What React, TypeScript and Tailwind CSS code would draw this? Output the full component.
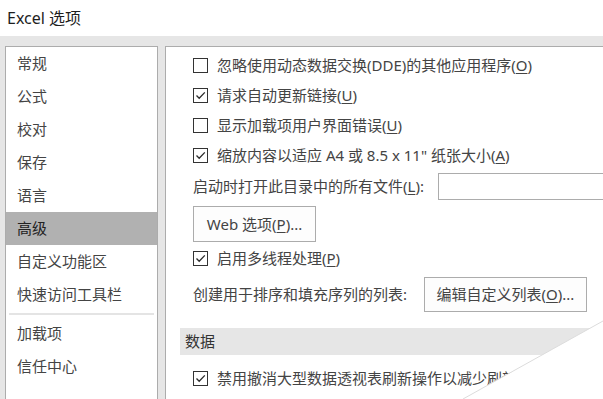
import React from "react"

const menu = ["常规", "公式", "校对", "保存", "语言", "高级", "自定义功能区", "快速访问工具栏"]
const menu2 = ["加载项", "信任中心"]

function Box({ checked }: { checked?: boolean }) {
    return (
        <span className="w-[15px] h-[15px] border border-[#333] bg-white flex items-center justify-center shrink-0">
            {checked && (
                <svg width="13" height="13" viewBox="0 0 13 13">
                    <polyline points="2.5,6.5 5.2,9.3 10.8,3.4" fill="none" stroke="#2b2b2b" strokeWidth="1.3" />
                </svg>
            )}
        </span>
    )
}

function CheckRow({ checked, children, className = "" }: { checked?: boolean; children: React.ReactNode; className?: string }) {
    return (
        <div className={`flex items-center h-[30px] ml-[13px] ${className}`}>
            <Box checked={checked} />
            <span className="ml-[9px] whitespace-nowrap">{children}</span>
        </div>
    )
}

export default function App() {
    return (
        <div
            className="relative w-[603px] h-[399px] overflow-hidden bg-white text-[15px] text-[#444]"
            style={{ fontFamily: '"Noto Sans", "Noto Sans CJK SC", sans-serif' }}
        >
            <div className="h-[36px] flex items-center pl-[7px] text-[16px] text-[#1e1e1e]">Excel 选项</div>

            <div className="flex gap-[7px] bg-[#e6e6e6] pt-[10px] pl-[5px] h-[363px]">
                {/* left nav */}
                <div className="w-[153px] h-[400px] shrink-0 border border-[#acacac] bg-white">
                    {menu.map((m) => (
                        <div
                            key={m}
                            className={`h-[33px] flex items-center pl-[11px] ${m === "高级" ? "bg-[#b1b1b1] text-[#222]" : ""}`}
                        >
                            {m}
                        </div>
                    ))}
                    <div className="h-[2px] bg-[#e4e4e4] mx-[3px] my-[2px]" />
                    {menu2.map((m) => (
                        <div key={m} className="h-[33px] flex items-center pl-[11px]">
                            {m}
                        </div>
                    ))}
                </div>

                {/* right content */}
                <div className="flex-1 h-[400px] border-l border-t border-[#acacac] bg-white pl-[14px] pt-[3px]">
                    <CheckRow>
                        忽略使用动态数据交换(DDE)的其他应用程序(<u className="underline-offset-2">O</u>)
                    </CheckRow>
                    <CheckRow checked>
                        请求自动更新链接(<u className="underline-offset-2">U</u>)
                    </CheckRow>
                    <CheckRow>
                        显示加载项用户界面错误(<u className="underline-offset-2">U</u>)
                    </CheckRow>
                    <CheckRow checked>
                        缩放内容以适应 A4 或 8.5 x 11" 纸张大小(<u className="underline-offset-2">A</u>)
                    </CheckRow>

                    <div className="flex items-center h-[27px] mt-[3px] ml-[13px]">
                        <span className="w-[245px] shrink-0 whitespace-nowrap">
                            启动时打开此目录中的所有文件(<u className="underline-offset-2">L</u>):
                        </span>
                        <div className="h-[27px] w-[200px] shrink-0 border border-[#acacac] bg-white" />
                    </div>

                    <button
                        type="button"
                        className="mt-[6px] ml-[13px] h-[36px] w-[123px] border border-[#acacac] bg-[#fdfdfd] text-[#444] flex items-center justify-center"
                    >
                        Web 选项(<u className="underline-offset-2">P</u>)...
                    </button>

                    <CheckRow checked className="mt-[1px]">
                        启用多线程处理(<u className="underline-offset-2">P</u>)
                    </CheckRow>

                    <div className="flex items-center h-[35px] mt-[4px] ml-[13px]">
                        <span className="w-[231px] shrink-0 whitespace-nowrap">创建用于排序和填充序列的列表:</span>
                        <button
                            type="button"
                            className="h-[35px] w-[163px] border border-[#acacac] bg-[#fdfdfd] text-[#444] flex items-center justify-center whitespace-nowrap"
                        >
                            编辑自定义列表(<u className="underline-offset-2">O</u>)...
                        </button>
                    </div>

                    <div className="mt-[16px] h-[27px] bg-[#e6e6e6] flex items-center pl-[5px] text-[#333]">数据</div>

                    <CheckRow checked className="mt-[8px]">
                        禁用撤消大型数据透视表刷新操作以减少刷新所需内存
                    </CheckRow>
                </div>
            </div>

            {/* page curl / torn corner */}
            <svg className="absolute inset-0 pointer-events-none" width="603" height="399" viewBox="0 0 603 399">
                <polygon points="603,321 603,399 463,399" fill="#ffffff" />
                <line x1="603" y1="321" x2="463" y2="399" stroke="#dcdcdc" strokeWidth="1" />
            </svg>
        </div>
    )
}
